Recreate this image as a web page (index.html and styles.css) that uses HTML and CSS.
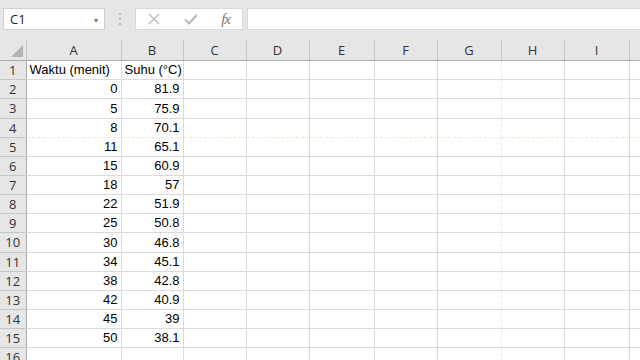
FILE: index.html
```html
<!DOCTYPE html>
<html lang="id">
<head>
    <meta charset="UTF-8" />
    <meta name="viewport" content="width=device-width, initial-scale=1" />
    <title>Book1 - Excel</title>
    <link rel="stylesheet" href="styles.css">
</head>
<body>
<div class="formula-bar">
    <div class="name-box">
        <span>C1</span>
        <span class="caret">&#9662;</span>
    </div>
    <div class="grip">
        <svg width="3" height="13" viewBox="0 0 3 13">
            <rect x="0" y="0" width="2" height="2" fill="#b5b5b5"/>
            <rect x="0" y="5" width="2" height="2" fill="#b5b5b5"/>
            <rect x="0" y="10" width="2" height="2" fill="#b5b5b5"/>
        </svg>
    </div>
    <div class="fx-buttons">
        <svg class="btn-icon" width="14" height="14" viewBox="0 0 14 14">
            <path d="M2 2 L12 12 M12 2 L2 12" stroke="#b9b9b9" stroke-width="1.4" fill="none"/>
        </svg>
        <svg class="btn-icon" width="16" height="14" viewBox="0 0 16 14">
            <path d="M2 7.5 L6 11.5 L14 3" stroke="#b9b9b9" stroke-width="2" fill="none"/>
        </svg>
        <span class="fx">fx</span>
    </div>
    <div class="formula-input"></div>
</div>

<div class="sheet-wrap">
<table class="sheet">
    <colgroup>
        <col class="c-row">
        <col class="c-a">
        <col class="c-b">
        <col class="c-c">
        <col class="c-d">
        <col class="c-e">
        <col class="c-f">
        <col class="c-g">
        <col class="c-h">
        <col class="c-i">
        <col class="c-j">
    </colgroup>
    <thead>
        <tr class="head">
            <th class="corner"><span class="tri"></span></th>
            <th>A</th><th>B</th><th>C</th><th>D</th><th>E</th><th>F</th><th>G</th><th>H</th><th>I</th><th></th>
        </tr>
    </thead>
    <tbody>
        <tr><th>1</th><td>Waktu (menit)</td><td>Suhu (°C)</td><td></td><td></td><td></td><td></td><td class="pb"></td><td></td><td></td><td></td></tr>
        <tr><th>2</th><td class="num">0</td><td class="num">81.9</td><td></td><td></td><td></td><td></td><td class="pb"></td><td></td><td></td><td></td></tr>
        <tr class="tall"><th>3</th><td class="num">5</td><td class="num">75.9</td><td></td><td></td><td></td><td></td><td class="pb"></td><td></td><td></td><td></td></tr>
        <tr class="pb-row"><th>4</th><td class="num">8</td><td class="num">70.1</td><td></td><td></td><td></td><td></td><td class="pb"></td><td></td><td></td><td></td></tr>
        <tr><th>5</th><td class="num">11</td><td class="num">65.1</td><td></td><td></td><td></td><td></td><td class="pb"></td><td></td><td></td><td></td></tr>
        <tr><th>6</th><td class="num">15</td><td class="num">60.9</td><td></td><td></td><td></td><td></td><td class="pb"></td><td></td><td></td><td></td></tr>
        <tr><th>7</th><td class="num">18</td><td class="num">57</td><td></td><td></td><td></td><td></td><td class="pb"></td><td></td><td></td><td></td></tr>
        <tr><th>8</th><td class="num">22</td><td class="num">51.9</td><td></td><td></td><td></td><td></td><td class="pb"></td><td></td><td></td><td></td></tr>
        <tr><th>9</th><td class="num">25</td><td class="num">50.8</td><td></td><td></td><td></td><td></td><td class="pb"></td><td></td><td></td><td></td></tr>
        <tr class="tall"><th>10</th><td class="num">30</td><td class="num">46.8</td><td></td><td></td><td></td><td></td><td class="pb"></td><td></td><td></td><td></td></tr>
        <tr><th>11</th><td class="num">34</td><td class="num">45.1</td><td></td><td></td><td></td><td></td><td class="pb"></td><td></td><td></td><td></td></tr>
        <tr><th>12</th><td class="num">38</td><td class="num">42.8</td><td></td><td></td><td></td><td></td><td class="pb"></td><td></td><td></td><td></td></tr>
        <tr><th>13</th><td class="num">42</td><td class="num">40.9</td><td></td><td></td><td></td><td></td><td class="pb"></td><td></td><td></td><td></td></tr>
        <tr><th>14</th><td class="num">45</td><td class="num">39</td><td></td><td></td><td></td><td></td><td class="pb"></td><td></td><td></td><td></td></tr>
        <tr><th>15</th><td class="num">50</td><td class="num">38.1</td><td></td><td></td><td></td><td></td><td class="pb"></td><td></td><td></td><td></td></tr>
        <tr><th>16</th><td></td><td></td><td></td><td></td><td></td><td></td><td class="pb"></td><td></td><td></td><td></td></tr>
    </tbody>
</table>
</div>
</body>
</html>
```

FILE: styles.css
```css
:root {
    --chrome: #e6e6e6;
    --header: #e6e6e6;
    --header-text: #333;
    --grid: #dadada;
    --header-line: #c6c6c6;
    --header-edge: #ababab;
    --text: #000;
    --page-break: #f4e7d2;
}
html, body {
    margin: 0;
    padding: 0;
    overflow: hidden;
    background-color: #fff;
}
body {
    width: 640px;
    height: 360px;
}

/* formula bar */
.formula-bar {
    display: flex;
    align-items: flex-start;
    height: 40px;
    padding: 8px 0 0 3px;
    box-sizing: border-box;
    background-color: var(--chrome);
    font-family: "Open Sans", "Liberation Sans", sans-serif;
}
.name-box {
    display: flex;
    align-items: center;
    justify-content: space-between;
    width: 102px;
    height: 22px;
    box-sizing: border-box;
    padding: 0 6px 0 6px;
    background-color: #fff;
    border: 1px solid #d0d0d0;
    font-size: 13px;
    color: #222;
}
.caret {
    font-size: 8px;
    color: #777;
}
.grip {
    width: 30px;
    height: 22px;
    display: flex;
    align-items: center;
    justify-content: center;
}
.fx-buttons {
    display: flex;
    align-items: center;
    justify-content: space-between;
    width: 108px;
    height: 22px;
    box-sizing: border-box;
    padding: 0 12px 0 11px;
    background-color: #fff;
    border: 1px solid #d8d8d8;
}
.fx {
    font-family: "Liberation Serif", "DejaVu Serif", serif;
    font-style: italic;
    font-size: 15px;
    color: #7a7a7a;
    letter-spacing: -1px;
}
.formula-input {
    flex: 1;
    height: 22px;
    margin-left: 4px;
    box-sizing: border-box;
    background-color: #fff;
    border: 1px solid #d8d8d8;
    border-right: none;
}

/* sheet grid */
.sheet-wrap {
    width: 640px;
    height: 320px;
    overflow: hidden;
}
.sheet {
    border-collapse: collapse;
    table-layout: fixed;
    width: 693px;
    font-family: "Liberation Sans", Arial, sans-serif;
    font-size: 13px;
    color: var(--text);
}
.c-row { width: 26px; }
.c-a { width: 95px; }
.c-b { width: 62px; }
.c-c { width: 63px; }
.c-d { width: 63px; }
.c-e { width: 65px; }
.c-f { width: 63px; }
.c-g { width: 64px; }
.c-h { width: 63px; }
.c-i { width: 65px; }
.c-j { width: 64px; }

.sheet tr {
    height: 19px;
}
.sheet tr.tall {
    height: 20px;
}
.sheet tr.head {
    height: 20px;
}
.sheet td {
    padding: 0 3px 1px 3px;
    border-right: 1px solid var(--grid);
    border-bottom: 1px solid var(--grid);
    vertical-align: bottom;
    white-space: nowrap;
    overflow: hidden;
    line-height: 16px;
}
.sheet td.num {
    text-align: right;
}
.sheet th {
    padding: 0;
    font-family: "Open Sans", "Noto Sans", sans-serif;
    font-weight: normal;
    font-size: 13px;
    color: var(--header-text);
    background-color: var(--header);
    text-align: center;
    line-height: 16px;
}
.sheet thead th {
    border-right: 1px solid var(--header-line);
    border-bottom: 1px solid var(--header-edge);
}
.sheet tbody th {
    border-right: 1px solid var(--header-edge);
    border-bottom: 1px solid var(--header-line);
}
.sheet th.corner {
    position: relative;
}
.tri {
    position: absolute;
    right: 3px;
    bottom: 3px;
    width: 0;
    height: 0;
    border-left: 12px solid transparent;
    border-bottom: 12px solid #b4b4b4;
}
.sheet tr.pb-row td {
    border-bottom: 1px dashed var(--page-break);
}
.sheet td.pb {
    border-right: 1px dashed var(--page-break);
}
```
